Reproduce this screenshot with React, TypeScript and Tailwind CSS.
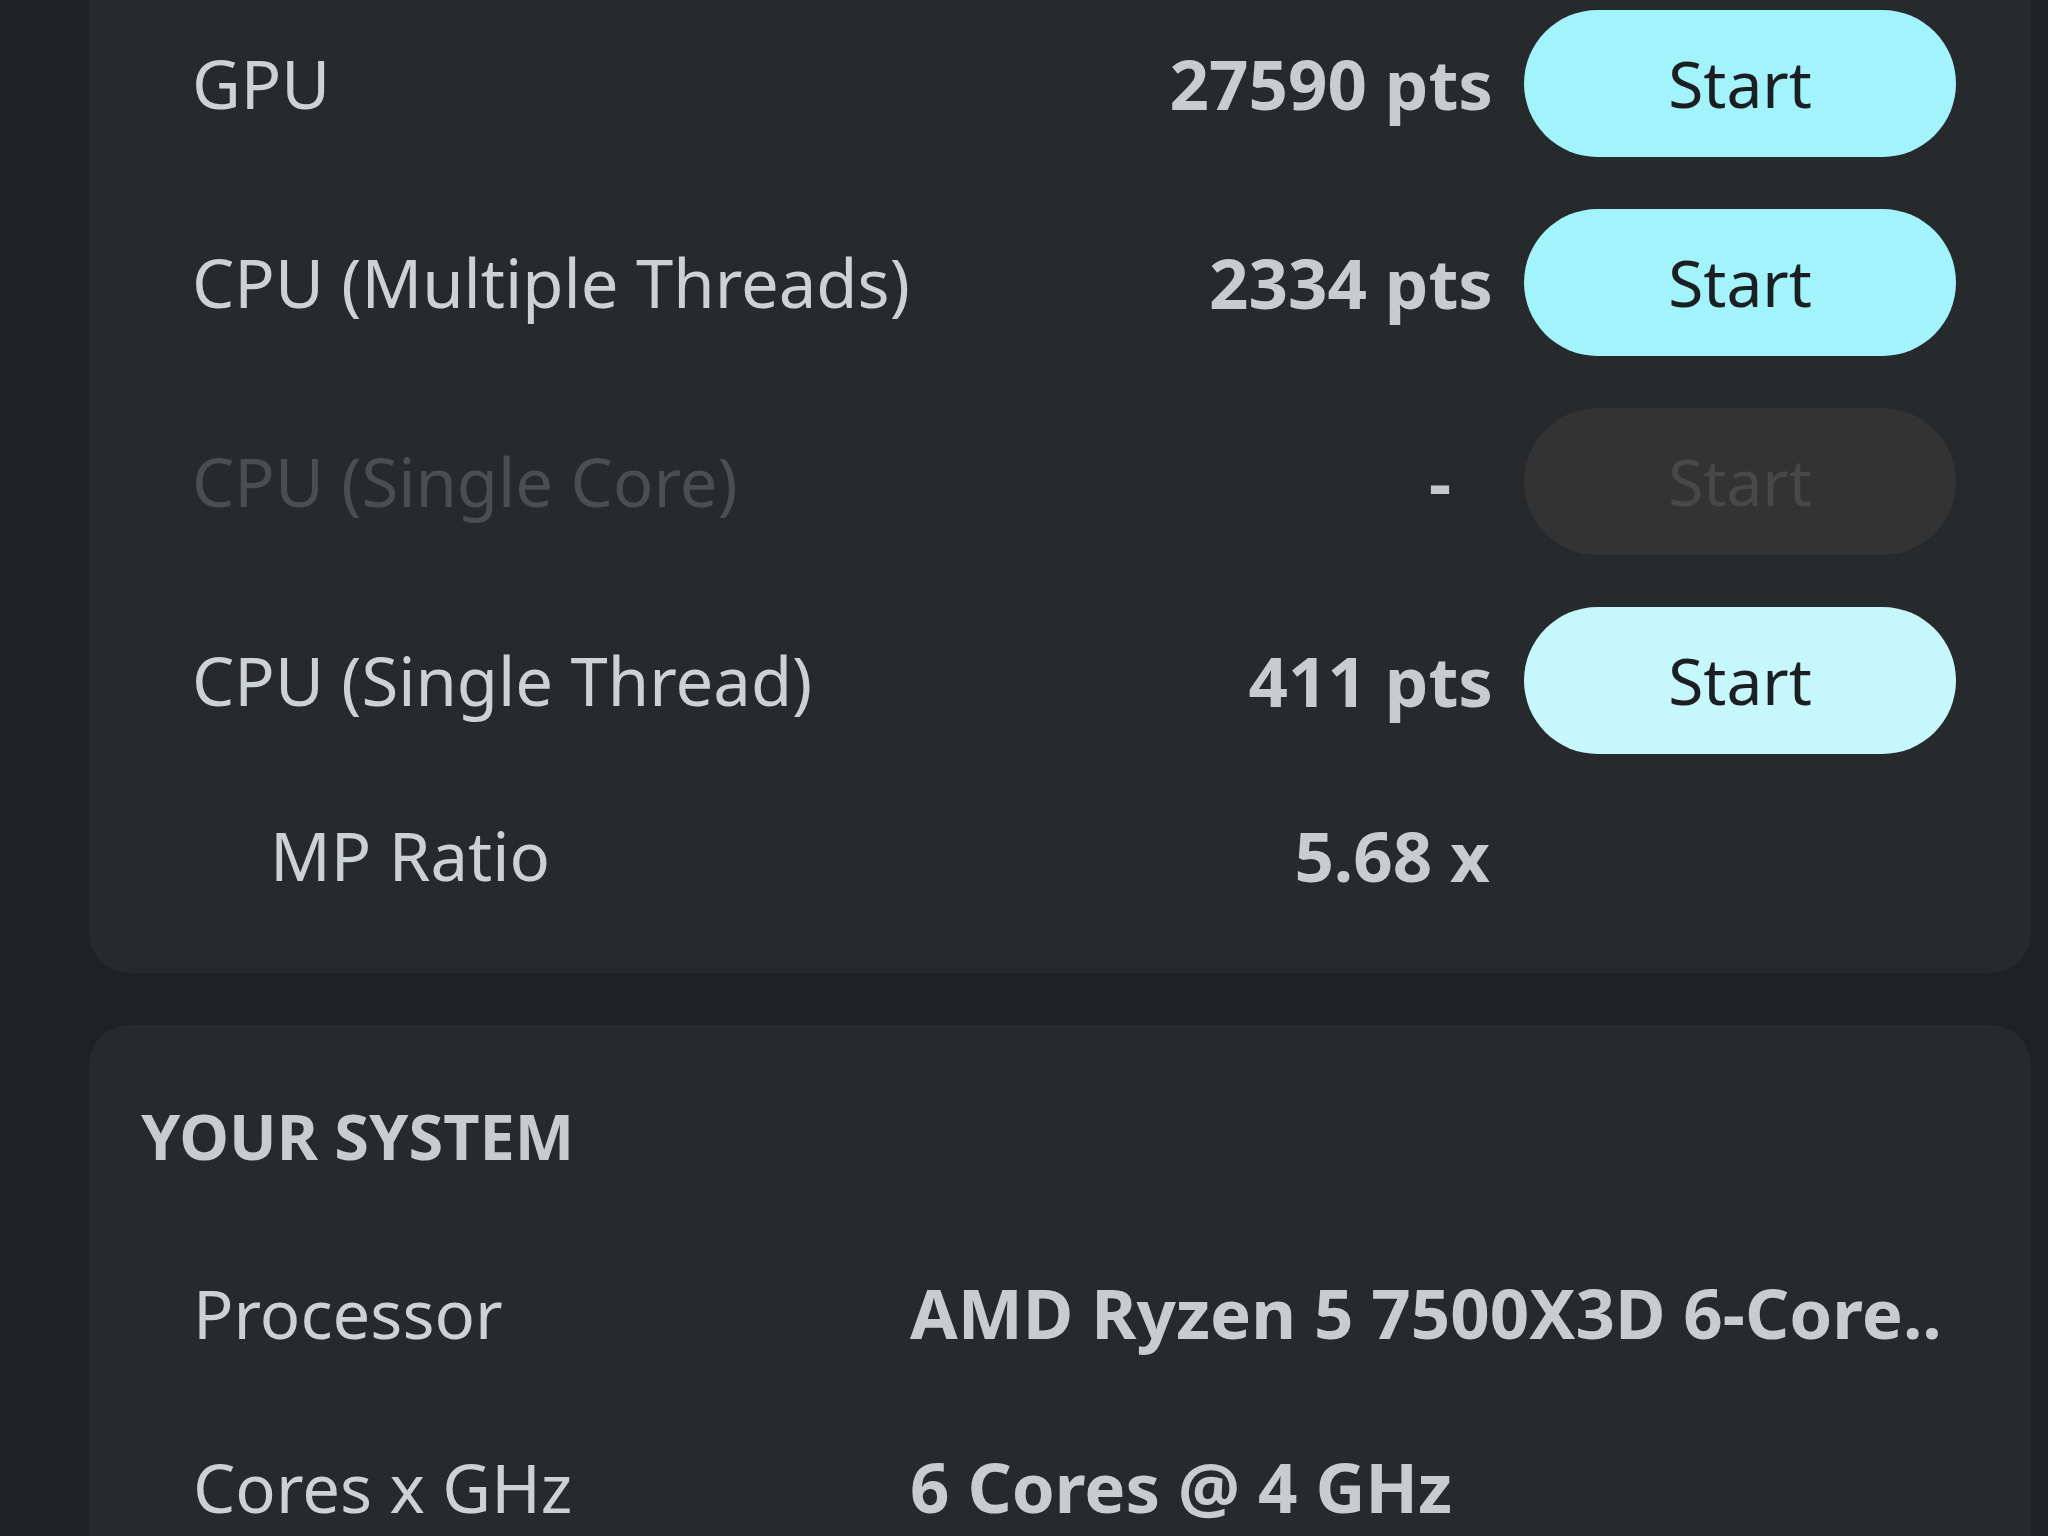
const font = { fontFamily: '"Noto Sans", "Open Sans", sans-serif' };

type Bench = { name: string; score: string; state: "ready" | "disabled" | "hover" };

const BENCHES: Bench[] = [
  { name: "GPU", score: "27590 pts", state: "ready" },
  { name: "CPU (Multiple Threads)", score: "2334 pts", state: "ready" },
  { name: "CPU (Single Core)", score: "-", state: "disabled" },
  { name: "CPU (Single Thread)", score: "411 pts", state: "hover" },
];

function BenchRow({ b }: { b: Bench }) {
  const off = b.state === "disabled";
  return (
    <div className="flex h-[147px] items-center whitespace-nowrap">
      <span className={`flex-1 text-[67px] ${off ? "text-[#4a4e51]" : "text-[#ccd1d5]"}`}>{b.name}</span>
      <span className={`text-[69px] font-bold ${off ? "mr-[42px] text-[#c8c8c8]" : "text-[#c9cbcc]"}`}>{b.score}</span>
      <button
        disabled={off}
        className={`ml-[31px] h-[147px] w-[432px] rounded-full text-[64px] ${
          off
            ? "bg-[#333333] text-[#484848]"
            : b.state === "hover"
              ? "bg-[#c6f7fd] text-[#1c1f22]"
              : "bg-[#a3f3fd] text-[#1c1f22]"
        }`}
      >
        Start
      </button>
    </div>
  );
}

function InfoRow({ label, value }: { label: string; value: string }) {
  return (
    <div className="flex h-[174px] items-center whitespace-nowrap">
      <span className="w-[717px] shrink-0 text-[67px] text-[#ccd1d5]">{label}</span>
      <span className="text-[69px] font-bold text-[#c9cbcc]">{value}</span>
    </div>
  );
}

export default function App() {
  return (
    <div className="flex h-[1536px] w-[2048px] flex-col gap-[52px] overflow-hidden bg-[#1f2224] pl-[89px] pr-[17px]" style={font}>
      {/* Benchmarks */}
      <div className="flex h-[973px] shrink-0 flex-col rounded-b-[40px] bg-[#262a2d] pl-[103px] pr-[75px] pt-[10px]">
        <div className="flex flex-col gap-[52px]">
          {BENCHES.map((b) => (
            <BenchRow key={b.name} b={b} />
          ))}
        </div>
        <div className="mt-[28px] flex h-[147px] items-center whitespace-nowrap">
          <span className="flex-1 pl-[78px] text-[67px] text-[#ccd1d5]">MP Ratio</span>
          <span className="mr-[466px] text-[69px] font-bold text-[#c9cbcc]">5.68 x</span>
        </div>
      </div>

      {/* Your system */}
      <div className="flex flex-1 flex-col rounded-t-[40px] bg-[#262a2d] pl-[52px] pr-[40px] pt-[70px]">
        <div className="text-[63px] font-bold uppercase leading-[1.3] text-[#c9cbcc]">Your system</div>
        <div className="mt-[49px] pl-[52px]">
          <InfoRow label="Processor" value="AMD Ryzen 5 7500X3D 6-Core.." />
          <InfoRow label="Cores x GHz" value="6 Cores @ 4 GHz" />
        </div>
      </div>
    </div>
  );
}
